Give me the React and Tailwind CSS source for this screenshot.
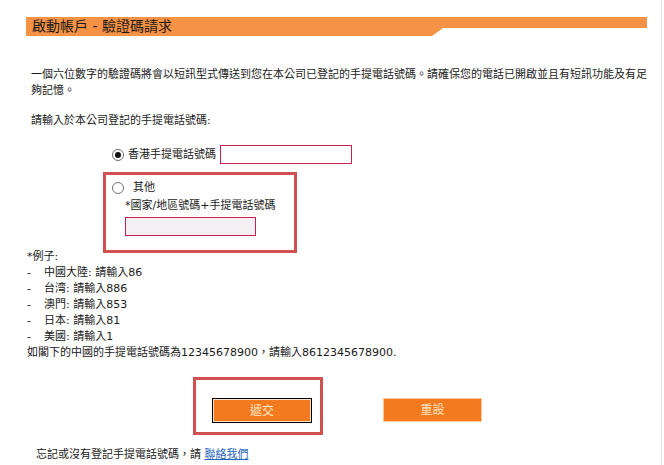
const Radio = ({ checked }) => (
    <span className="w-[12px] h-[12px] rounded-full border border-[#707070] bg-white flex items-center justify-center shrink-0">
        {checked && <span className="w-[6px] h-[6px] rounded-full bg-[#111]" />}
    </span>
);

const examples = [
    '中國大陸: 請輸入86',
    '台湾: 請輸入886',
    '澳門: 請輸入853',
    '日本: 請輸入81',
    '美國: 請輸入1',
];

export default function App() {
    return (
        <div className="w-[664px] h-[465px] bg-white overflow-hidden font-['DejaVu_Sans','Noto_Sans_CJK_TC',sans-serif] text-[11px] leading-4 text-[#1a1a1a]">
            <div className="w-[662px] h-full border-r border-[#e2e2e2] pt-[17px]">

                {/* Title bar */}
                <div className="ml-[26px] w-[621px] h-[19px] bg-[#f69245] [clip-path:polygon(0_0,100%_0,100%_11px,417px_11px,406px_100%,0_100%)] pl-[6px] text-[14px] leading-[19px] text-[#1a1a1a]">
                    啟動帳戶 - 驗證碼請求
                </div>

                {/* Intro */}
                <p className="mt-[31px] ml-[31px] whitespace-nowrap">
                    一個六位數字的驗證碼將會以短訊型式傳送到您在本公司已登記的手提電話號碼。請確保您的電話已開啟並且有短訊功能及有足
                    <br />
                    夠記憶。
                </p>

                <p className="mt-[14px] ml-[31px]">請輸入於本公司登記的手提電話號碼:</p>

                {/* HK mobile */}
                <div className="mt-4 ml-[112px] flex items-center h-[19px]">
                    <Radio checked />
                    <span className="ml-[4px]">香港手提電話號碼</span>
                    <input type="text" className="ml-[4px] w-[132px] h-[19px] border border-[#c8204f] bg-white outline-none" />
                </div>

                {/* Other */}
                <div className="mt-2 ml-[103px] w-[194px] h-[81px] border-[3px] border-[#d2504f] pt-[5px]">
                    <div className="flex items-center h-4 ml-[6px]">
                        <Radio />
                        <span className="ml-[9px]">其他</span>
                    </div>
                    <p className="mt-[2px] ml-[19px]">*國家/地區號碼+手提電話號碼</p>
                    <input type="text" className="block mt-[3px] ml-[19px] w-[131px] h-[19px] border border-[#c8204f] bg-[#f3eff2] outline-none" />
                </div>

                {/* Examples */}
                <div className="-mt-1 ml-[27px]">
                    <p>*例子:</p>
                    {examples.map((e) => (
                        <div key={e} className="flex">
                            <span className="w-[17px]">-</span>
                            <span>{e}</span>
                        </div>
                    ))}
                    <p>如閣下的中國的手提電話號碼為12345678900，請輸入8612345678900.</p>
                </div>

                {/* Buttons */}
                <div className="mt-4 flex items-start">
                    <div className="ml-[193px] w-[130px] h-[58px] border-[3px] border-[#d2504f] pt-[18px] pl-[16px]">
                        <button className="w-[100px] h-[25px] border border-black bg-[#f47a20] shadow-[inset_0_0_0_1px_#fde3c0] text-[12px] text-[#fde7c4]">
                            遞交
                        </button>
                    </div>
                    <button className="ml-[60px] mt-[21px] w-[99px] h-[24px] border border-[#f9c99c] bg-[#f47a20] text-[12px] text-[#fde7c4]">
                        重設
                    </button>
                </div>

                <p className="mt-[12px] ml-[36px]">
                    忘記或沒有登記手提電話號碼，請 <a href="#" className="text-[#2a64b8] underline">聯絡我們</a>
                </p>
            </div>
        </div>
    );
}
